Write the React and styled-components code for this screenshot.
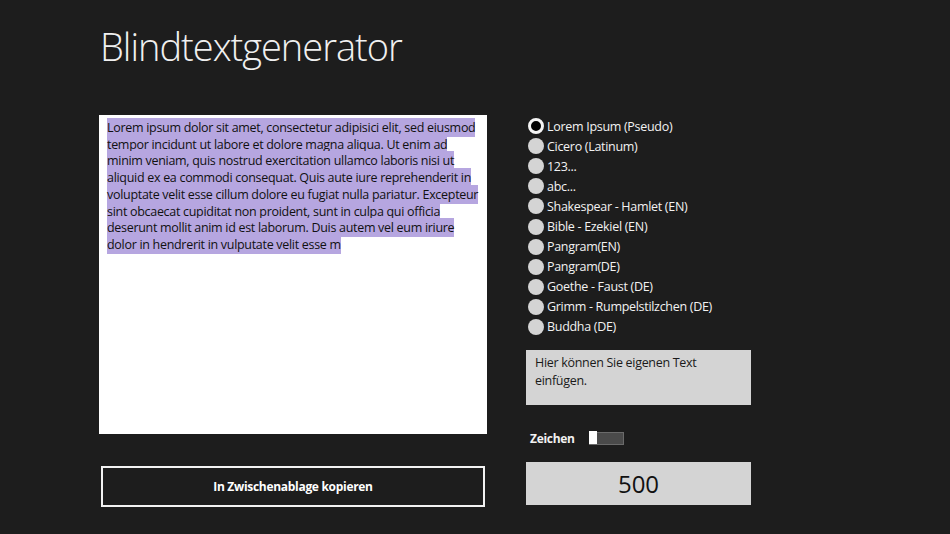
import { useState } from 'react';
import styled, { createGlobalStyle } from 'styled-components';

const GlobalStyle = createGlobalStyle`
  html, body {
    margin: 0;
    padding: 0;
    background: #1d1d1d;
    font-family: "Open Sans", "Noto Sans", sans-serif;
  }
`;

const LINES = [
  'Lorem ipsum dolor sit amet, consectetur adipisici elit, sed eiusmod',
  'tempor incidunt ut labore et dolore magna aliqua. Ut enim ad',
  'minim veniam, quis nostrud exercitation ullamco laboris nisi ut',
  'aliquid ex ea commodi consequat. Quis aute iure reprehenderit in',
  'voluptate velit esse cillum dolore eu fugiat nulla pariatur. Excepteur',
  'sint obcaecat cupiditat non proident, sunt in culpa qui officia',
  'deserunt mollit anim id est laborum. Duis autem vel eum iriure',
  'dolor in hendrerit in vulputate velit esse m',
];

const SOURCES = [
  'Lorem Ipsum (Pseudo)',
  'Cicero (Latinum)',
  '123...',
  'abc...',
  'Shakespear - Hamlet (EN)',
  'Bible - Ezekiel (EN)',
  'Pangram(EN)',
  'Pangram(DE)',
  'Goethe - Faust (DE)',
  'Grimm - Rumpelstilzchen (DE)',
  'Buddha (DE)',
];

function App() {
  const [source, setSource] = useState(0);

  return (
    <SPage>
      <GlobalStyle />
      <STitle>Blindtextgenerator</STitle>
      <SMain>
        <SLeft>
          <STextBox>
            {LINES.map((line, i) => (
              <SLine key={i}>
                <SMark>{line} </SMark>
              </SLine>
            ))}
          </STextBox>
          <SCopyButton>In Zwischenablage kopieren</SCopyButton>
        </SLeft>

        <SRight>
          <SRadioList>
            {SOURCES.map((label, i) => (
              <SRadioRow key={label} onClick={() => setSource(i)}>
                <SRadioDot $checked={source === i} />
                {label}
              </SRadioRow>
            ))}
          </SRadioList>
          <SOwnText>Hier können Sie eigenen Text einfügen.</SOwnText>
          <SToggleRow>
            <SToggleLabel>Zeichen</SToggleLabel>
            <SToggle>
              <SThumb />
            </SToggle>
          </SToggleRow>
          <SCount>500</SCount>
        </SRight>
      </SMain>
    </SPage>
  );
}

const SPage = styled.div`
  width: 950px;
  height: 534px;
  box-sizing: border-box;
  padding: 22px 0 0 99px;
  color: #ffffff;
`;

const STitle = styled.h1`
  margin: 0 0 0 1px;
  font-size: 38px;
  font-weight: 300;
  line-height: 48px;
  letter-spacing: -1px;
  color: #f0f0f0;
`;

const SMain = styled.div`
  display: flex;
  gap: 39px;
  margin-top: 45px;
`;

const SLeft = styled.div`
  width: 388px;
  display: flex;
  flex-direction: column;
`;

const STextBox = styled.div`
  height: 319px;
  box-sizing: border-box;
  background: #ffffff;
  padding: 5px 8px;
  color: #111111;
  font-size: 12.5px;
  letter-spacing: -0.3px;
  line-height: 16.7px;
`;

const SLine = styled.div`
  white-space: nowrap;
`;

const SMark = styled.span`
  background: #b6a6e0;
  padding: 1px 0;
`;

const SCopyButton = styled.button`
  margin: 32px 2px 0;
  height: 41px;
  border: 2px solid #f2f2f2;
  background: transparent;
  color: #ffffff;
  font-family: "Open Sans", "Noto Sans", sans-serif;
  font-size: 12px;
  font-weight: 700;
  letter-spacing: -0.3px;
  cursor: pointer;
`;

const SRight = styled.div`
  width: 225px;
  display: flex;
  flex-direction: column;
`;

const SRadioList = styled.div`
  display: flex;
  flex-direction: column;
  margin-top: 1px;
`;

const SRadioRow = styled.label`
  display: flex;
  align-items: center;
  height: 20.1px;
  padding-left: 2px;
  font-size: 12.5px;
  letter-spacing: -0.3px;
  color: #f2f2f2;
  cursor: pointer;
`;

const SRadioDot = styled.span`
  width: 16px;
  height: 16px;
  margin-right: 3px;
  border-radius: 50%;
  box-sizing: border-box;
  background: ${(p) => (p.$checked ? '#000000' : '#d4d4d4')};
  border: ${(p) => (p.$checked ? '3.5px solid #f4f4f4' : 'none')};
`;

const SOwnText = styled.div`
  margin-top: 13px;
  height: 55px;
  box-sizing: border-box;
  padding: 4px 9px;
  background: #d4d4d4;
  color: #1a1a1a;
  font-size: 12.5px;
  letter-spacing: -0.3px;
  line-height: 17.5px;
`;

const SToggleRow = styled.div`
  display: flex;
  align-items: center;
  margin-top: 25px;
  padding-left: 4px;
  height: 16px;
`;

const SToggleLabel = styled.span`
  font-size: 12px;
  font-weight: 700;
  letter-spacing: -0.3px;
  color: #f2f2f2;
  width: 59px;
`;

const SToggle = styled.span`
  position: relative;
  width: 35px;
  height: 13px;
  box-sizing: border-box;
  border: 1.5px solid #6a6a6a;
  background: #4a4a4a;
`;

const SThumb = styled.span`
  position: absolute;
  left: -1.5px;
  top: -1.5px;
  width: 8px;
  height: 13px;
  background: #ffffff;
`;

const SCount = styled.div`
  margin-top: 16px;
  height: 43px;
  background: #d4d4d4;
  color: #111111;
  font-size: 24px;
  display: flex;
  align-items: center;
  justify-content: center;
`;

export default App;
